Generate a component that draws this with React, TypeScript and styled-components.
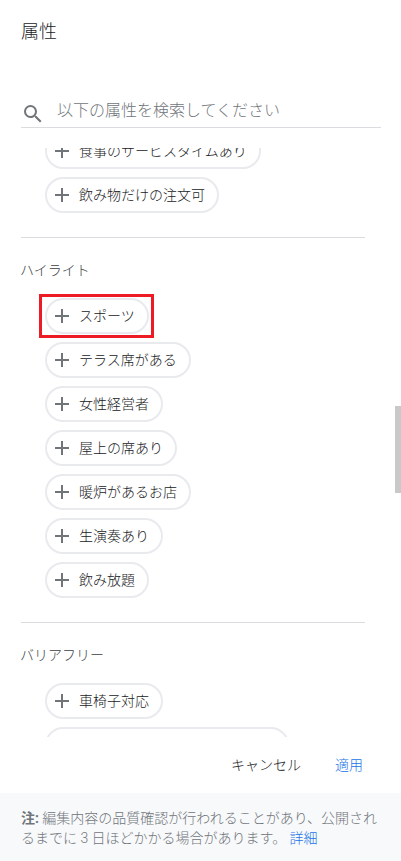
import styled, { createGlobalStyle } from 'styled-components';

const GlobalStyle = createGlobalStyle`
  html, body {
    margin: 0;
    padding: 0;
    background: #fff;
  }
  * {
    box-sizing: border-box;
  }
`;

const Panel = styled.div`
  position: relative;
  display: flex;
  flex-direction: column;
  width: 401px;
  height: 861px;
  overflow: hidden;
  background: #fff;
  color: #202124;
  font-family: 'Roboto', 'Noto Sans CJK JP', sans-serif;
  font-size: 14px;
  font-weight: 300;
`;

const Header = styled.h1`
  margin: 0;
  padding: 20px 21px 0;
  height: 91px;
  flex: none;
  font-size: 18px;
  font-weight: 300;
  line-height: 24px;
  color: #202124;
`;

const SearchBar = styled.div`
  display: flex;
  flex: none;
  align-items: center;
  gap: 12px;
  height: 37px;
  margin: 0 20px 20px 21px;
  border-bottom: 1px solid #dadce0;
`;

const SearchIcon = styled.svg`
  width: 24px;
  height: 24px;
  flex: none;
  fill: #70757a;
  margin-top: 9px;
`;

const SearchText = styled.span`
  font-size: 16px;
  line-height: 24px;
  color: #70757a;
  margin-top: 3px;
`;

const List = styled.div`
  flex: 1;
  min-height: 0;
  overflow: hidden;
  padding: 0 36px 0 20px;
`;

const Scrolled = styled.div`
  margin-top: -15px;
`;

const Section = styled.section`
  padding-bottom: 24px;
  border-bottom: 1px solid #dadce0;
  margin-bottom: 22px;
  margin-left: 1px;
`;

const SectionTitle = styled.h2`
  margin: 0 0 18px;
  font-size: 14px;
  font-weight: 300;
  line-height: 20px;
  color: #3c4043;
`;

const Chips = styled.div<{ $flush?: boolean }>`
  display: flex;
  flex-direction: column;
  align-items: flex-start;
  gap: 8px;
  padding-left: ${({ $flush }) => ($flush ? '25px' : '24px')};
`;

const Chip = styled.div`
  position: relative;
  display: inline-flex;
  align-items: center;
  flex: none;
  gap: 5px;
  height: 36px;
  padding: 0 12px 0 3px;
  border: 2px solid #e8eaed;
  border-radius: 18px;
  background: #fff;
  color: #202124;
  line-height: 20px;
  white-space: nowrap;
`;

const PlusIcon = styled.svg`
  width: 24px;
  height: 24px;
  flex: none;
  fill: #70757a;
`;

const Highlight = styled.div`
  position: absolute;
  left: -8px;
  top: -6px;
  width: 115px;
  height: 44px;
  border: 3px solid #ed1c24;
  pointer-events: none;
`;

const Actions = styled.div`
  display: flex;
  flex: none;
  align-items: center;
  justify-content: flex-end;
  gap: 34px;
  height: 56px;
  padding-right: 38px;
`;

const ActionButton = styled.button<{ $primary?: boolean }>`
  padding: 0;
  border: none;
  background: none;
  font: inherit;
  line-height: 20px;
  color: ${({ $primary }) => ($primary ? '#1a73e8' : '#202124')};
`;

const Note = styled.div`
  flex: none;
  height: 68px;
  padding: 15px 21px 0;
  background: #f8f9fa;
  color: #70757a;
  line-height: 20px;
`;

const NoteLabel = styled.strong`
  font-weight: 700;
`;

const NoteLink = styled.a`
  color: #1a73e8;
  text-decoration: none;
`;

const Scrollbar = styled.div`
  position: absolute;
  right: 0;
  top: 406px;
  width: 6px;
  height: 87px;
  background: #c9c9c9;
`;

const Plus = () => (
  <PlusIcon viewBox="0 0 24 24">
    <path d="M19 13h-6v6h-2v-6H5v-2h6V5h2v6h6v2z" />
  </PlusIcon>
);

const diningChips = ['食事のサービスタイムあり', '飲み物だけの注文可'];
const highlightChips = ['スポーツ', 'テラス席がある', '女性経営者', '屋上の席あり', '暖炉があるお店', '生演奏あり', '飲み放題'];
const accessChips = ['車椅子対応', '車椅子対応のお手洗いがある店'];

const App = () => (
  <Panel>
    <GlobalStyle />
    <Header>属性</Header>
    <SearchBar>
      <SearchIcon viewBox="0 0 24 24">
        <path d="M15.5 14h-.79l-.28-.27A6.471 6.471 0 0 0 16 9.5 6.5 6.5 0 1 0 9.5 16c1.61 0 3.09-.59 4.23-1.57l.27.28v.79l5 4.99L20.49 19l-4.99-5zm-6 0C7.01 14 5 11.99 5 9.5S7.01 5 9.5 5 14 7.01 14 9.5 11.99 14 9.5 14z" />
      </SearchIcon>
      <SearchText>以下の属性を検索してください</SearchText>
    </SearchBar>
    <List>
      <Scrolled>
        <Section>
          <Chips>
            {diningChips.map((label) => (
              <Chip key={label}>
                <Plus />
                {label}
              </Chip>
            ))}
          </Chips>
        </Section>
        <SectionTitle>ハイライト</SectionTitle>
        <Section>
          <Chips>
            {highlightChips.map((label) => (
              <Chip key={label}>
                <Plus />
                {label}
                {label === 'スポーツ' && <Highlight />}
              </Chip>
            ))}
          </Chips>
        </Section>
        <SectionTitle>バリアフリー</SectionTitle>
        <Chips $flush>
          {accessChips.map((label) => (
            <Chip key={label}>
              <Plus />
              {label}
            </Chip>
          ))}
        </Chips>
      </Scrolled>
    </List>
    <Actions>
      <ActionButton>キャンセル</ActionButton>
      <ActionButton $primary>適用</ActionButton>
    </Actions>
    <Note>
      <NoteLabel>注:</NoteLabel> 編集内容の品質確認が行われることがあり、公開されるまでに 3 日ほどかかる場合があります。 <NoteLink>詳細</NoteLink>
    </Note>
    <Scrollbar />
  </Panel>
);

export default App;
